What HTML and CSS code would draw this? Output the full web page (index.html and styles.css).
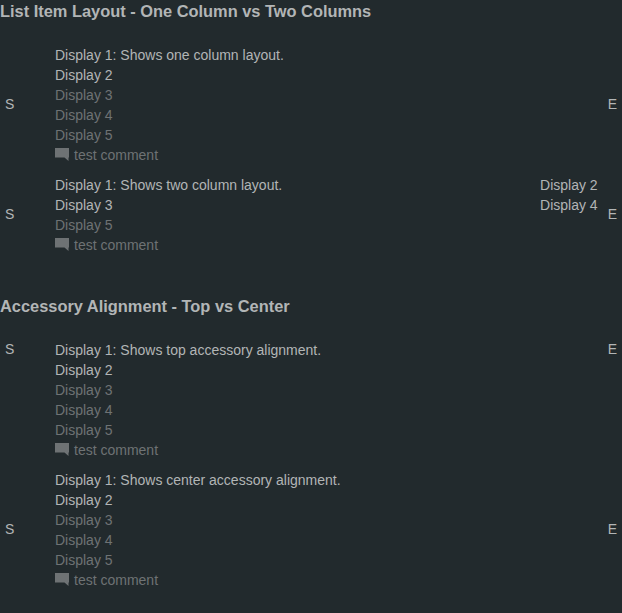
FILE: index.html
```html
<!DOCTYPE html>
<html lang="en">
<head>
<meta charset="utf-8">
<title>List Item Layout</title>
<link rel="stylesheet" href="styles.css">
</head>
<body>
<svg class="defs"><symbol id="comment" viewBox="0 0 14 14"><path d="M0 0h14v9.5h-.5V13L9.5 9.5H0z"/></symbol></svg>
<h3>List Item Layout - One Column vs Two Columns</h3>
<ul class="list">
  <li class="item">
    <div class="accessory">S</div>
    <div class="body">
      <div>Display 1: Shows one column layout.</div><div>Display 2</div>
      <div class="dim">Display 3</div><div class="dim">Display 4</div><div class="dim">Display 5</div>
      <div class="dim comment"><svg class="icon"><use href="#comment"/></svg>test comment</div>
    </div>
    <div class="accessory end">E</div>
  </li>
  <li class="item">
    <div class="accessory">S</div>
    <div class="body">
      <div class="row"><span>Display 1: Shows two column layout.</span><span>Display 2</span></div>
      <div class="row"><span>Display 3</span><span>Display 4</span></div>
      <div class="dim">Display 5</div>
      <div class="dim comment"><svg class="icon"><use href="#comment"/></svg>test comment</div>
    </div>
    <div class="accessory end">E</div>
  </li>
</ul>
<h3>Accessory Alignment - Top vs Center</h3>
<ul class="list">
  <li class="item top">
    <div class="accessory">S</div>
    <div class="body">
      <div>Display 1: Shows top accessory alignment.</div><div>Display 2</div>
      <div class="dim">Display 3</div><div class="dim">Display 4</div><div class="dim">Display 5</div>
      <div class="dim comment"><svg class="icon"><use href="#comment"/></svg>test comment</div>
    </div>
    <div class="accessory end">E</div>
  </li>
  <li class="item">
    <div class="accessory">S</div>
    <div class="body">
      <div>Display 1: Shows center accessory alignment.</div><div>Display 2</div>
      <div class="dim">Display 3</div><div class="dim">Display 4</div><div class="dim">Display 5</div>
      <div class="dim comment"><svg class="icon"><use href="#comment"/></svg>test comment</div>
    </div>
    <div class="accessory end">E</div>
  </li>
</ul>
</body>
</html>
```
FILE: styles.css
```css
body {
  margin: 0;
  background: #222a2d;
  color: #b2b5b6;
  font: 14px/20px "Liberation Sans", Arial, sans-serif;
}
.defs { display: none; }
h3 {
  margin: 0;
  height: 40px;
  font-size: 16.4px;
  line-height: 23px;
}
.list {
  margin: 0;
  padding: 0;
  list-style: none;
}
.list + h3 { margin-top: 35px; }
.item {
  display: flex;
  align-items: center;
  padding: 5px;
}
.item.top { align-items: flex-start; }
.accessory {
  width: 50px;
  margin-top: -2px;
}
.top .accessory { margin-top: -1px; }
.end {
  width: auto;
  margin-left: 10px;
}
.body { flex: 1; }
.row {
  display: flex;
  justify-content: space-between;
}
.dim { color: #6e7274; }
.comment {
  display: flex;
  gap: 5px;
}
.icon {
  width: 14px;
  height: 14px;
  margin-top: 3px;
  fill: currentColor;
}
```
